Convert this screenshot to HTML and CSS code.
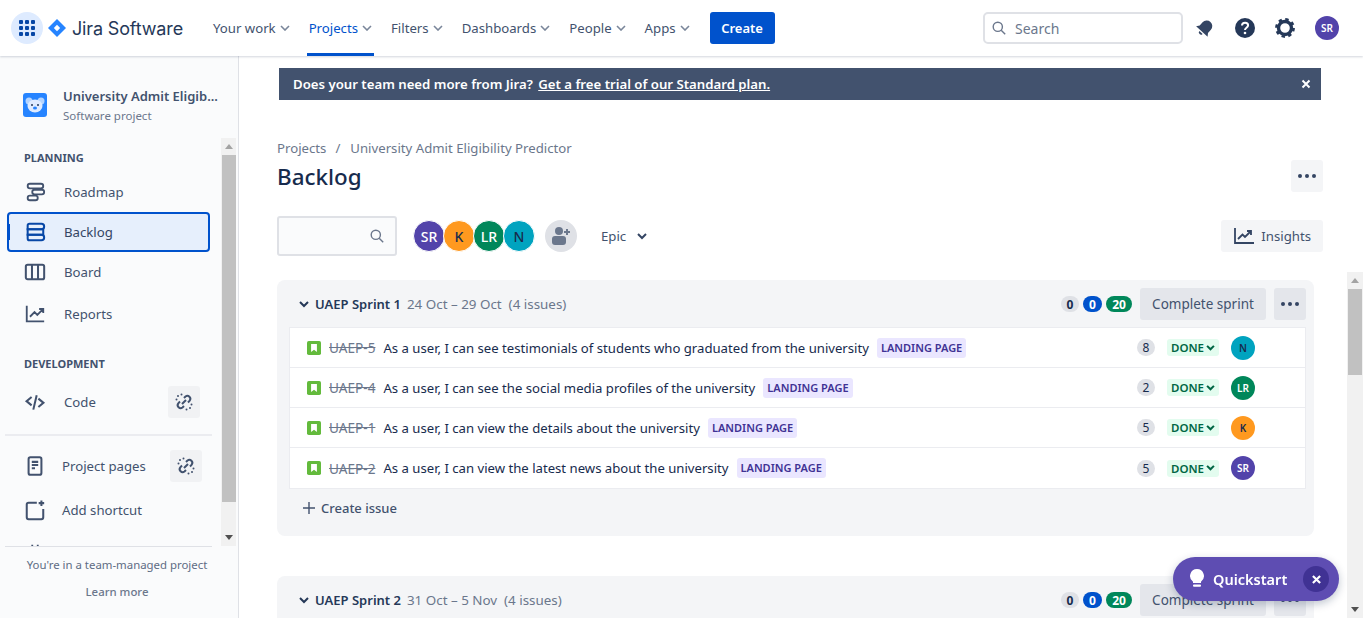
FILE: index.html
```html
<!DOCTYPE html>
<html>
<head>
    <title>Backlog - University Admit Eligibility Predictor</title>
    <link rel="stylesheet" href="styles.css">
</head>
<body>
    <!-- Top navigation -->
    <header class="topbar">
        <button class="app-switcher">
            <svg width="16" height="16" viewBox="0 0 16 16" fill="#0747a6"><rect x="0" y="0" width="4" height="4" rx="1"/><rect x="6" y="0" width="4" height="4" rx="1"/><rect x="12" y="0" width="4" height="4" rx="1"/><rect x="0" y="6" width="4" height="4" rx="1"/><rect x="6" y="6" width="4" height="4" rx="1"/><rect x="12" y="6" width="4" height="4" rx="1"/><rect x="0" y="12" width="4" height="4" rx="1"/><rect x="6" y="12" width="4" height="4" rx="1"/><rect x="12" y="12" width="4" height="4" rx="1"/></svg>
        </button>
        <div class="logo">
            <svg width="18" height="18" viewBox="0 0 18 18"><path d="M9 0l9 9-9 9-9-9z" fill="#2684ff"/><path d="M9 5.800L12.200 9 9 12.200 5.800 9z" fill="#fff"/></svg>
            <span class="logo-text">Jira Software</span>
        </div>
        <nav class="topnav">
            <a class="topnav-item">Your work <svg class="caret" viewBox="0 0 10 6"><path d="M1 1l4 4 4-4"/></svg></a>
            <a class="topnav-item active">Projects <svg class="caret" viewBox="0 0 10 6"><path d="M1 1l4 4 4-4"/></svg></a>
            <a class="topnav-item">Filters <svg class="caret" viewBox="0 0 10 6"><path d="M1 1l4 4 4-4"/></svg></a>
            <a class="topnav-item">Dashboards <svg class="caret" viewBox="0 0 10 6"><path d="M1 1l4 4 4-4"/></svg></a>
            <a class="topnav-item">People <svg class="caret" viewBox="0 0 10 6"><path d="M1 1l4 4 4-4"/></svg></a>
            <a class="topnav-item">Apps <svg class="caret" viewBox="0 0 10 6"><path d="M1 1l4 4 4-4"/></svg></a>
        </nav>
        <button class="create-btn">Create</button>
        <div class="search-box">
            <svg width="14" height="14" viewBox="0 0 14 14" fill="none" stroke="#6b778c" stroke-width="1.400"><circle cx="5.800" cy="5.800" r="4.600"/><path d="M9.200 9.200l4 4"/></svg>
            <span>Search</span>
        </div>
        <div class="top-icons">
            <svg width="24" height="24" viewBox="-2 -2 28 28" fill="#344563"><g transform="rotate(42 12 12)"><path d="M12 2.500a6.500 6.500 0 0 0-6.500 6.500v5l-2.500 3.500h18L18.500 14V9A6.500 6.500 0 0 0 12 2.500z"/><path d="M9.500 19h5a2.500 2.500 0 0 1-5 0z"/></g></svg>
            <svg width="24" height="24" viewBox="0 0 24 24"><circle cx="12" cy="12" r="10" fill="#253858"/><path d="M9 9.500c0-1.800 1.400-2.800 3.100-2.800s3 1 3 2.600c0 2.600-3.100 2.400-3.100 4.700" fill="none" stroke="#fff" stroke-width="2"/><circle cx="12" cy="17" r="1.300" fill="#fff"/></svg>
            <svg width="24" height="24" viewBox="0 0 24 24"><circle cx="12" cy="12" r="6.500" fill="none" stroke="#253858" stroke-width="3.400"/><circle cx="12" cy="12" r="8.700" fill="none" stroke="#253858" stroke-width="2.400" stroke-dasharray="3.400 3.430"/></svg>
            <span class="avatar purple">SR</span>
        </div>
    </header>

    <div class="layout">
        <!-- Project sidebar -->
        <aside class="sidebar">
            <div class="project">
                <svg class="project-icon" width="24" height="24" viewBox="0 0 24 24"><rect width="24" height="24" rx="3" fill="#2684ff"/><circle cx="6" cy="8" r="3.500" fill="#b3d4ff"/><circle cx="18" cy="8" r="3.500" fill="#b3d4ff"/><ellipse cx="12" cy="13" rx="7.500" ry="6.500" fill="#deebff"/><circle cx="9" cy="12" r="1" fill="#253858"/><circle cx="15" cy="12" r="1" fill="#253858"/><ellipse cx="12" cy="15" rx="2" ry="1.500" fill="#2684ff"/></svg>
                <div>
                    <div class="project-name">University Admit Eligib...</div>
                    <div class="project-type">Software project</div>
                </div>
            </div>
            <div class="side-scroll">
                <div class="side-nav">
                    <div class="side-heading first">PLANNING</div>
                    <a class="side-item">
                        <svg class="side-icon" viewBox="0 0 24 24" fill="none" stroke="#42526e" stroke-width="2"><rect x="4" y="3" width="17" height="5" rx="2.500"/><rect x="9" y="9.500" width="13" height="5" rx="2.500"/><rect x="4" y="16" width="11" height="5" rx="2.500"/></svg>
                        Roadmap
                    </a>
                    <a class="side-item selected">
                        <svg class="side-icon" viewBox="0 0 24 24" fill="none" stroke="#0747a6" stroke-width="2.200"><path d="M6 3h13a3 3 0 0 1 0 6H4V5a2 2 0 0 1 2-2z"/><path d="M4 9h17v6H4z"/><path d="M4 15h15a3 3 0 0 1 0 6H6a2 2 0 0 1-2-2z"/></svg>
                        Backlog
                    </a>
                    <a class="side-item">
                        <svg class="side-icon" viewBox="0 0 24 24" fill="none" stroke="#42526e" stroke-width="2.200"><rect x="2" y="4" width="20" height="16" rx="2"/><path d="M8.700 4v16M15.300 4v16"/></svg>
                        Board
                    </a>
                    <a class="side-item reports">
                        <svg class="side-icon" viewBox="0 0 24 24" fill="none" stroke="#42526e" stroke-width="2"><path d="M3 3v17h19"/><path d="M6.500 15l5-5 3 3 6-6M16.500 6.500h4.500v4.500"/></svg>
                        Reports
                    </a>
                    <div class="side-heading second">DEVELOPMENT</div>
                    <a class="side-item code">
                        <svg class="side-icon" viewBox="-1 -1 26 26" fill="none" stroke="#42526e" stroke-width="2.400"><path d="M8 6l-6 5 6 5M16 8l6 5-6 5M14 4l-4 17"/></svg>
                        Code
                        <span class="unlink"><svg width="18" height="18" viewBox="0 0 18 18" fill="none" stroke="#42526e" stroke-width="2"><path d="M9 5l1.500-1.500a3 3 0 0 1 4.200 4.200L13 9.500M9 13l-1.500 1.500a3 3 0 0 1-4.200-4.200L5 8.500M7 11l4-4"/><circle cx="3" cy="3" r="1" fill="#42526e" stroke="none"/><circle cx="6.500" cy="1.500" r="1" fill="#42526e" stroke="none"/><circle cx="1.500" cy="6.500" r="1" fill="#42526e" stroke="none"/><circle cx="15" cy="15" r="1" fill="#42526e" stroke="none"/><circle cx="11.500" cy="16.500" r="1" fill="#42526e" stroke="none"/><circle cx="16.500" cy="11.500" r="1" fill="#42526e" stroke="none"/></svg></span>
                    </a>
                    <div class="side-divider"></div>
                    <a class="side-item pages">
                        <svg class="side-icon" viewBox="0 0 24 24" fill="none" stroke="#42526e" stroke-width="2.200"><rect x="5" y="2.500" width="14" height="19" rx="2"/><path d="M8.500 7.500h7M8.500 11h7M8.500 14.500h3.500"/></svg>
                        Project pages
                        <span class="unlink"><svg width="18" height="18" viewBox="0 0 18 18" fill="none" stroke="#42526e" stroke-width="2"><path d="M9 5l1.500-1.500a3 3 0 0 1 4.200 4.200L13 9.500M9 13l-1.500 1.500a3 3 0 0 1-4.200-4.200L5 8.500M7 11l4-4"/><circle cx="3" cy="3" r="1" fill="#42526e" stroke="none"/><circle cx="6.500" cy="1.500" r="1" fill="#42526e" stroke="none"/><circle cx="1.500" cy="6.500" r="1" fill="#42526e" stroke="none"/><circle cx="15" cy="15" r="1" fill="#42526e" stroke="none"/><circle cx="11.500" cy="16.500" r="1" fill="#42526e" stroke="none"/><circle cx="16.500" cy="11.500" r="1" fill="#42526e" stroke="none"/></svg></span>
                    </a>
                    <a class="side-item shortcut">
                        <svg class="side-icon" viewBox="0 0 24 24" fill="none" stroke="#42526e" stroke-width="2.200"><path d="M14 4H5a2 2 0 0 0-2 2v14a2 2 0 0 0 2 2h14a2 2 0 0 0 2-2v-9"/><path d="M19 1.500v6M16 4.500h6"/></svg>
                        Add shortcut
                    </a>
                    <a class="side-item shortcut">
                        <svg class="side-icon" viewBox="0 0 24 24" fill="#42526e"><path d="M5 4h14v3H5zM8 2h2v3H8zM14 2h2v3h-2z"/></svg>
                    </a>
                </div>
                <div class="side-scrollbar">
                    <span class="arrow-up"></span>
                    <div class="side-thumb"></div>
                    <span class="arrow-down"></span>
                </div>
            </div>
            <div class="side-footer">
                <div>You're in a team-managed project</div>
                <div class="learn-more">Learn more</div>
            </div>
        </aside>

        <main class="main">
            <div class="banner">
                <span class="banner-text">Does your team need more from Jira? <u>Get a free trial of our Standard plan.</u></span>
                <svg width="10" height="10" viewBox="0 0 10 10" stroke="#fff" stroke-width="2"><path d="M1.500 1.500l7 7M8.500 1.500l-7 7"/></svg>
            </div>

            <div class="page-head">
                <div class="breadcrumb">Projects<span class="sep">/</span>University Admit Eligibility Predictor</div>
                <div class="title-row">
                    <h1>Backlog</h1>
                    <button class="more-plain"><i></i><i></i><i></i></button>
                </div>
                <div class="toolbar">
                    <div class="filter-box">
                        <svg width="14" height="14" viewBox="0 0 14 14" fill="none" stroke="#6b778c" stroke-width="1.400"><circle cx="5.800" cy="5.800" r="4.600"/><path d="M9.200 9.200l4 4"/></svg>
                    </div>
                    <div class="people">
                        <span class="person purple">SR</span>
                        <span class="person orange">K</span>
                        <span class="person green">LR</span>
                        <span class="person teal">N</span>
                    </div>
                    <span class="add-person">
                        <svg width="20" height="20" viewBox="0 0 20 20" fill="#6b778c"><circle cx="8" cy="5" r="4"/><path d="M1 13a3 3 0 0 1 3-3h8a3 3 0 0 1 3 3v3a3 3 0 0 1-3 3H4a3 3 0 0 1-3-3z"/><path d="M15 3h2v2h2v2h-2v2h-2V7h-2V5h2z"/></svg>
                    </span>
                    <span class="epic">Epic <svg width="10" height="7" viewBox="0 0 10 7" fill="none" stroke="#344563" stroke-width="2"><path d="M1 1l4 4 4-4"/></svg></span>
                    <button class="insights">
                        <svg width="20" height="18" viewBox="0 0 20 18" fill="none" stroke="#344563" stroke-width="1.800"><path d="M1 1v15h19"/><path d="M4 12l4.500-4.500 2.500 2.500 5.500-5.500M13 4h4v4"/></svg>
                        Insights
                    </button>
                </div>
            </div>

            <div class="board">
                <div class="sprints">
                    <section class="sprint">
                        <div class="sprint-head">
                            <svg class="chevron" width="10" height="7" viewBox="0 0 10 7" fill="none" stroke="#253858" stroke-width="2"><path d="M1 1l4 4 4-4"/></svg>
                            <span class="sprint-name">UAEP Sprint 1</span>
                            <span class="sprint-meta">24 Oct – 29 Oct &nbsp;(4 issues)</span>
                            <div class="sprint-actions">
                                <span class="count grey">0</span>
                                <span class="count blue">0</span>
                                <span class="count emerald">20</span>
                                <button class="complete">Complete sprint</button>
                                <button class="more-btn"><i></i><i></i><i></i></button>
                            </div>
                        </div>
                        <div class="issues">
                            <div class="issue">
                                <svg class="story" viewBox="0 0 12 12"><rect width="12" height="12" rx="1.500" fill="#63ba3c"/><path d="M3.500 2.500h5v7L6 7.500l-2.500 2z" fill="#fff"/></svg>
                                <span class="key">UAEP-5</span>
                                <span class="summary">As a user, I can see testimonials of students who graduated from the university</span>
                                <span class="epic-label">LANDING PAGE</span>
                                <span class="points">8</span>
                                <span class="status">DONE <svg width="9" height="6" viewBox="0 0 10 7" fill="none" stroke="#006644" stroke-width="2.400"><path d="M1 1l4 4 4-4"/></svg></span>
                                <span class="avatar teal">N</span>
                            </div>
                            <div class="issue">
                                <svg class="story" viewBox="0 0 12 12"><rect width="12" height="12" rx="1.500" fill="#63ba3c"/><path d="M3.500 2.500h5v7L6 7.500l-2.500 2z" fill="#fff"/></svg>
                                <span class="key">UAEP-4</span>
                                <span class="summary">As a user, I can see the social media profiles of the university</span>
                                <span class="epic-label">LANDING PAGE</span>
                                <span class="points">2</span>
                                <span class="status">DONE <svg width="9" height="6" viewBox="0 0 10 7" fill="none" stroke="#006644" stroke-width="2.400"><path d="M1 1l4 4 4-4"/></svg></span>
                                <span class="avatar green">LR</span>
                            </div>
                            <div class="issue">
                                <svg class="story" viewBox="0 0 12 12"><rect width="12" height="12" rx="1.500" fill="#63ba3c"/><path d="M3.500 2.500h5v7L6 7.500l-2.500 2z" fill="#fff"/></svg>
                                <span class="key">UAEP-1</span>
                                <span class="summary">As a user, I can view the details about the university</span>
                                <span class="epic-label">LANDING PAGE</span>
                                <span class="points">5</span>
                                <span class="status">DONE <svg width="9" height="6" viewBox="0 0 10 7" fill="none" stroke="#006644" stroke-width="2.400"><path d="M1 1l4 4 4-4"/></svg></span>
                                <span class="avatar orange">K</span>
                            </div>
                            <div class="issue">
                                <svg class="story" viewBox="0 0 12 12"><rect width="12" height="12" rx="1.500" fill="#63ba3c"/><path d="M3.500 2.500h5v7L6 7.500l-2.500 2z" fill="#fff"/></svg>
                                <span class="key">UAEP-2</span>
                                <span class="summary">As a user, I can view the latest news about the university</span>
                                <span class="epic-label">LANDING PAGE</span>
                                <span class="points">5</span>
                                <span class="status">DONE <svg width="9" height="6" viewBox="0 0 10 7" fill="none" stroke="#006644" stroke-width="2.400"><path d="M1 1l4 4 4-4"/></svg></span>
                                <span class="avatar purple">SR</span>
                            </div>
                        </div>
                        <div class="create-issue">
                            <svg width="12" height="12" viewBox="0 0 12 12" stroke="#42526e" stroke-width="1.400"><path d="M6 0v12M0 6h12"/></svg>
                            Create issue
                        </div>
                    </section>

                    <section class="sprint">
                        <div class="sprint-head">
                            <svg class="chevron" width="10" height="7" viewBox="0 0 10 7" fill="none" stroke="#253858" stroke-width="2"><path d="M1 1l4 4 4-4"/></svg>
                            <span class="sprint-name">UAEP Sprint 2</span>
                            <span class="sprint-meta">31 Oct – 5 Nov &nbsp;(4 issues)</span>
                            <div class="sprint-actions">
                                <span class="count grey">0</span>
                                <span class="count blue">0</span>
                                <span class="count emerald">20</span>
                                <button class="complete">Complete sprint</button>
                                <button class="more-btn"><i></i><i></i><i></i></button>
                            </div>
                        </div>
                    </section>
                </div>
                <div class="page-scrollbar">
                    <span class="arrow-up"></span>
                    <div class="page-thumb"></div>
                    <span class="arrow-down"></span>
                </div>
            </div>
        </main>
    </div>

    <!-- Floating quickstart button -->
    <div class="quickstart">
        <svg width="16" height="20" viewBox="0 0 16 20" fill="#fff"><path d="M8 0a7 7 0 0 0-4 12.700V14h8v-1.300A7 7 0 0 0 8 0z"/><rect x="4" y="15.500" width="8" height="2.200" rx="1"/></svg>
        <span>Quickstart</span>
        <span class="quick-close"><svg width="9" height="9" viewBox="0 0 10 10" stroke="#fff" stroke-width="2.400"><path d="M1 1l8 8M9 1l-8 8"/></svg></span>
    </div>
</body>
</html>
```

FILE: styles.css
```css
/* Reset default margin and padding */
* {
    margin: 0;
    padding: 0;
    box-sizing: border-box;
}

body {
    height: 618px;
    overflow: hidden;
    background-color: #fff;
    font-family: "Noto Sans", Arial, sans-serif;
    font-size: 13.2px;
    color: #42526e;
}

button {
    border: none;
    font-family: inherit;
}

/* Top navigation */
.topbar {
    position: relative;
    z-index: 2;
    display: flex;
    align-items: center;
    height: 56px;
    padding-left: 11px;
    background-color: #fff;
    box-shadow: 0 1px 2px rgba(9, 30, 66, 0.18);
}

.app-switcher {
    display: flex;
    align-items: center;
    justify-content: center;
    width: 32px;
    height: 32px;
    border-radius: 50%;
    background-color: #deebff;
}

.logo {
    display: flex;
    align-items: center;
    gap: 6px;
    margin-left: 5px;
}

.logo-text {
    font-family: "Inter", sans-serif;
    font-size: 18px;
    letter-spacing: -0.15px;
    color: #253858;
}

.topnav {
    display: flex;
    height: 56px;
    margin-left: 28px;
}

.topnav-item {
    display: flex;
    align-items: center;
    gap: 4px;
    padding: 0 2px;
    margin-right: 15px;
    white-space: nowrap;
    border-bottom: 3px solid transparent;
    border-top: 3px solid transparent;
}

.topnav-item.active {
    color: #0052cc;
    border-bottom-color: #0052cc;
}

.caret {
    width: 10px;
    height: 6px;
    fill: none;
    stroke: #7a869a;
    stroke-width: 1.6;
}

.create-btn {
    width: 65px;
    height: 32px;
    margin-left: 3px;
    border-radius: 3px;
    background-color: #0052cc;
    color: #fff;
    font-size: 13px;
    font-weight: 600;
}

.search-box {
    display: flex;
    align-items: center;
    gap: 9px;
    width: 200px;
    height: 32px;
    margin-left: auto;
    padding-left: 7px;
    border: 2px solid #dfe1e6;
    border-radius: 5px;
    font-size: 14px;
    color: #6b778c;
}

.top-icons {
    display: flex;
    align-items: center;
    gap: 16px;
    margin: 0 24px 0 10px;
}

.top-icons .avatar {
    margin-left: 2px;
}

.avatar {
    display: flex;
    align-items: center;
    justify-content: center;
    width: 24px;
    height: 24px;
    border-radius: 50%;
    font-size: 10px;
    font-weight: 600;
    color: #fff;
}

.purple {
    background-color: #5243aa;
    color: #fff;
}

.orange {
    background-color: #ff991f;
    color: #172b4d;
}

.green {
    background-color: #00875a;
    color: #fff;
}

.teal {
    background-color: #00a3bf;
    color: #172b4d;
}

/* Page layout */
.layout {
    display: flex;
    height: 562px;
}

.sidebar {
    display: flex;
    flex-direction: column;
    width: 239px;
    flex-shrink: 0;
    background-color: #fafbfc;
    border-right: 1px solid #dfe1e6;
}

.project {
    display: flex;
    align-items: center;
    gap: 16px;
    height: 82px;
    padding: 16px 0 0 23px;
}

.project-name {
    font-size: 13px;
    font-weight: 600;
    white-space: nowrap;
}

.project-type {
    margin-top: 3px;
    font-size: 11.5px;
    color: #6b778c;
}

.side-scroll {
    display: flex;
    height: 408px;
    overflow: hidden;
    margin-right: 2px;
}

.side-nav {
    flex: 1;
    min-width: 0;
}

.side-heading {
    padding-left: 24px;
    font-size: 11px;
    font-weight: 700;
    line-height: 16px;
}

.side-heading.first {
    margin-top: 12px;
    margin-bottom: 6px;
}

.side-heading.second {
    margin-top: 22px;
}

.side-item {
    display: flex;
    align-items: center;
    height: 40px;
    margin: 0 11px 0 7px;
    padding-left: 17px;
    border-radius: 4px;
    white-space: nowrap;
}

.side-item.selected {
    position: relative;
    border: 2px solid #0052cc;
    padding-left: 15px;
    background-color: #e6effc;
    color: #344563;
}

.side-item.selected::before {
    content: "";
    position: absolute;
    left: -2px;
    top: 10px;
    width: 3px;
    height: 16px;
    background-color: #0052cc;
}

.side-icon {
    width: 22px;
    height: 22px;
    margin-right: 18px;
    flex-shrink: 0;
}

.side-item.reports {
    margin-top: 2px;
}

.side-item.code {
    margin-top: 8px;
    height: 44px;
}

.side-item.pages .side-icon,
.side-item.shortcut .side-icon {
    margin-right: 16px;
}

.side-item.pages,
.side-item.shortcut {
    height: 44px;
}

.unlink {
    display: flex;
    align-items: center;
    justify-content: center;
    width: 32px;
    height: 32px;
    margin-left: auto;
    margin-right: 10px;
    border-radius: 3px;
    background-color: #f1f2f4;
}

.side-item.pages .unlink {
    margin-right: 8px;
}

.side-divider {
    height: 2px;
    margin: 10px 9px 8px 5px;
    background-color: #ebecf0;
}

.side-scrollbar {
    display: flex;
    flex-direction: column;
    align-items: center;
    width: 15px;
    flex-shrink: 0;
    background-color: #f1f1f1;
}

.side-thumb {
    width: 14px;
    height: 347px;
    background-color: #c1c1c1;
}

.arrow-up,
.arrow-down {
    display: block;
    width: 0;
    height: 0;
    margin: 6px 0;
    border-left: 4px solid transparent;
    border-right: 4px solid transparent;
}

.arrow-up {
    border-bottom: 5px solid #a3a3a3;
}

.arrow-down {
    margin-top: auto;
    border-top: 5px solid #505050;
}

.side-footer {
    margin: 0 26px 0 5px;
    padding: 10px 0 0 17px;
    border-top: 1px solid #dfe1e6;
    text-align: center;
    font-size: 11.4px;
    color: #5e6c84;
    white-space: nowrap;
}

.learn-more {
    margin-top: 12px;
    font-weight: 500;
    color: #6b778c;
}

/* Main content */
.main {
    flex: 1;
    min-width: 0;
    display: flex;
    flex-direction: column;
}

.banner {
    display: flex;
    align-items: center;
    justify-content: space-between;
    height: 32px;
    margin: 12px 42px 0 40px;
    padding: 0 10px 0 14px;
    background-color: #42526e;
    color: #fff;
}

.banner-text {
    font-size: 13.2px;
    font-weight: 600;
}

.banner-text u {
    margin-left: 2px;
}

.page-head {
    padding: 38px 40px 0 38px;
}

.breadcrumb {
    line-height: 20px;
    color: #6b778c;
}

.sep {
    margin: 0 10px 0 9px;
}

.title-row {
    display: flex;
    align-items: center;
    justify-content: space-between;
    height: 32px;
    margin-top: 2px;
}

h1 {
    font-size: 22.4px;
    font-weight: 500;
    color: #172b4d;
}

.more-plain,
.more-btn {
    display: flex;
    align-items: center;
    justify-content: center;
    gap: 3px;
    width: 32px;
    height: 32px;
    border-radius: 3px;
    background-color: #f4f5f7;
}

.more-plain i,
.more-btn i {
    width: 4px;
    height: 4px;
    border-radius: 50%;
    background-color: #344563;
}

.toolbar {
    display: flex;
    align-items: center;
    height: 40px;
    margin-top: 24px;
}

.filter-box {
    display: flex;
    align-items: center;
    justify-content: flex-end;
    width: 120px;
    height: 40px;
    padding-right: 11px;
    border: 2px solid #dfe1e6;
    border-radius: 3px;
    background-color: #fafbfc;
}

.people {
    display: flex;
    margin-left: 16px;
}

.person {
    display: flex;
    align-items: center;
    justify-content: center;
    width: 32px;
    height: 32px;
    margin-right: -2px;
    border-radius: 50%;
    border: 1px solid #fff;
    font-size: 14px;
    font-weight: 500;
}

.add-person {
    display: flex;
    align-items: center;
    justify-content: center;
    width: 32px;
    height: 32px;
    margin-left: 12px;
    border-radius: 50%;
    background-color: #dfe1e6;
}

.epic {
    display: flex;
    align-items: center;
    gap: 11px;
    margin-left: 24px;
    color: #42526e;
}

.insights {
    display: flex;
    align-items: center;
    gap: 7px;
    height: 32px;
    margin-left: auto;
    padding: 0 12px 0 13px;
    border-radius: 3px;
    background-color: #f4f5f7;
    font-size: 13.2px;
    color: #42526e;
}

/* Backlog board */
.board {
    display: flex;
    flex: 1;
    min-height: 0;
    margin-top: 16px;
    padding-left: 38px;
    overflow: hidden;
}

.sprints {
    flex: 1;
    min-width: 0;
    padding-top: 8px;
    margin-right: 33px;
}

.sprint {
    min-height: 80px;
    margin-bottom: 40px;
    padding: 8px 8px 9px 12px;
    border-radius: 8px;
    background-color: #f4f5f7;
}

.sprint-head {
    display: flex;
    align-items: center;
    height: 32px;
    padding-left: 10px;
}

.chevron {
    margin-right: 6px;
}

.sprint-name {
    font-weight: 600;
    font-size: 13px;
    color: #253858;
}

.sprint-meta {
    margin-left: 6px;
    font-size: 13.4px;
    color: #6b778c;
}

.sprint-actions {
    display: flex;
    align-items: center;
    margin-left: auto;
}

.count {
    display: flex;
    align-items: center;
    justify-content: center;
    height: 16px;
    min-width: 19px;
    margin-right: 4px;
    padding: 0 5px;
    border-radius: 8px;
    font-size: 12px;
    font-weight: 700;
}

.count.grey {
    min-width: 18px;
    background-color: #dfe1e6;
    color: #172b4d;
}

.count.blue {
    background-color: #0052cc;
    color: #fff;
}

.count.emerald {
    min-width: 26px;
    background-color: #00875a;
    color: #fff;
}

.complete {
    width: 126px;
    height: 32px;
    margin: 0 8px 0 4px;
    border-radius: 3px;
    background-color: #e4e6eb;
    font-size: 13.5px;
    color: #42526e;
}

.more-btn {
    background-color: #e4e6eb;
}

.issues {
    margin-top: 7px;
    background-color: #fff;
    border: 1px solid #ebecf0;
}

.issue {
    display: flex;
    align-items: center;
    height: 40px;
    padding-left: 17px;
    font-size: 13.15px;
    border-bottom: 1px solid #ebecf0;
}

.issue:last-child {
    border-bottom: none;
}

.story {
    width: 14px;
    height: 14px;
    flex-shrink: 0;
}

.key {
    margin-left: 8px;
    font-size: 13.6px;
    text-decoration: line-through;
    color: #6b778c;
}

.summary {
    margin-left: 8px;
    color: #172b4d;
}

.epic-label {
    margin-left: 8px;
    padding: 0 4px;
    border-radius: 3px;
    background-color: #eae6ff;
    color: #403294;
    font-size: 11px;
    font-weight: 600;
    line-height: 20px;
}

.points {
    display: flex;
    align-items: center;
    justify-content: center;
    width: 18px;
    height: 17px;
    margin-left: auto;
    border-radius: 9px;
    background-color: #dfe1e6;
    font-size: 12px;
    color: #172b4d;
}

.status {
    display: flex;
    align-items: center;
    gap: 2px;
    width: 52px;
    height: 17px;
    margin-left: 12px;
    padding-left: 4px;
    border-radius: 3px;
    background-color: #e3fcef;
    color: #006644;
    font-size: 11.5px;
    font-weight: 600;
}

.issue .avatar {
    margin: 0 50px 0 12px;
}

.create-issue {
    display: flex;
    align-items: center;
    gap: 6px;
    height: 38px;
    padding-left: 14px;
    font-weight: 500;
    font-size: 13px;
}

/* Scrollbar beside the backlog */
.page-scrollbar {
    display: flex;
    flex-direction: column;
    align-items: center;
    width: 16px;
    flex-shrink: 0;
    background-color: #f1f1f1;
}

.page-thumb {
    width: 14px;
    height: 86px;
    background-color: #c1c1c1;
}

/* Floating quickstart button */
.quickstart {
    position: fixed;
    left: 1173px;
    top: 557px;
    display: flex;
    align-items: center;
    width: 166px;
    height: 44px;
    padding-left: 16px;
    border-radius: 22px;
    background-color: #5e4db2;
    box-shadow: 0 3px 8px rgba(9, 30, 66, 0.25);
    color: #fff;
    font-size: 14.5px;
    font-weight: 600;
}

.quickstart span:first-of-type {
    margin-left: 8px;
}

.quick-close {
    display: flex;
    align-items: center;
    justify-content: center;
    width: 26px;
    height: 26px;
    margin-left: auto;
    margin-right: 10px;
    border-radius: 50%;
    background-color: #403294;
}
```
